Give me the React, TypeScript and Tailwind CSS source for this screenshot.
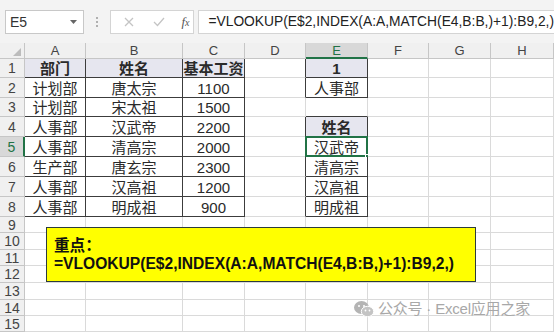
import React from "react";

const cols = ["A", "B", "C", "D", "E", "F", "G", "H", "I"];
const colW = [61, 97, 62, 61, 62, 61, 62, 63];
const rowH = [19, 20, 19, 20, 20, 20, 20, 20, 16, 17, 16, 17, 17, 16, 16];

const data: Record<string, string> = {
  A1: "部门", B1: "姓名", C1: "基本工资",
  A2: "计划部", B2: "唐太宗", C2: "1100",
  A3: "计划部", B3: "宋太祖", C3: "1500",
  A4: "人事部", B4: "汉武帝", C4: "2200",
  A5: "人事部", B5: "清高宗", C5: "2000",
  A6: "生产部", B6: "唐玄宗", C6: "2300",
  A7: "人事部", B7: "汉高祖", C7: "1200",
  A8: "人事部", B8: "明成祖", C8: "900",
  E1: "1", E2: "人事部", E4: "姓名",
  E5: "汉武帝", E6: "清高宗", E7: "汉高祖", E8: "明成祖",
};

const headerCells = new Set(["A1", "B1", "C1", "E1", "E4"]);

function inTable(c: number, r: number) {
  if (c <= 2 && r >= 1 && r <= 8) return true;
  if (c === 4 && (r === 1 || r === 2 || (r >= 4 && r <= 8))) return true;
  return false;
}

const formula = "=VLOOKUP(E$2,INDEX(A:A,MATCH(E4,B:B,)+1):B9,2,)";

function Cell({ c, r }: { c: number; r: number }) {
  const key = cols[c] + r;
  const t = inTable(c, r);
  const rightDark = t || inTable(c + 1, r);
  const bottomDark = t || inTable(c, r + 1);
  const isHead = headerCells.has(key);
  const selected = key === "E5";
  return (
    <div
      className={
        "relative flex items-center justify-center border-r border-b text-[15px] leading-none text-[#2a2a2a] " +
        (isHead ? "bg-[#e6e6ef] font-bold " : "bg-white ")
      }
      style={{
        borderRightColor: rightDark ? "#3c3c3c" : "#dadada",
        borderBottomColor: bottomDark ? "#3c3c3c" : "#dadada",
      }}
    >
      <span className="pt-[1px]">{data[key] ?? ""}</span>
      {selected && (
        <>
          <div className="pointer-events-none absolute -left-[1px] -top-[1px] -right-[1px] -bottom-[1px] border-2 border-[#217346]" />
          <div className="absolute -right-[4px] -bottom-[4px] h-[6px] w-[6px] border border-white bg-[#217346]" />
        </>
      )}
    </div>
  );
}

export default function App() {
  return (
    <div
      className="relative h-[332px] w-[554px] overflow-hidden bg-white"
      style={{ fontFamily: '"Liberation Sans", "Noto Sans CJK SC", Arial, sans-serif' }}
    >
      {/* Formula bar */}
      <div className="flex h-[43px] items-start gap-0 bg-[#f3f3f3] pt-[10px]">
        <div className="ml-[5px] flex h-[24px] w-[86px] items-center justify-between border border-[#c8c8c8] bg-white pl-[4px] pr-[6px] text-[14px] text-[#333]">
          <span>E5</span>
          <svg width="7" height="4" viewBox="0 0 7 4"><path d="M0 0 L7 0 L3.5 4 Z" fill="#666" /></svg>
        </div>
        <div className="ml-[12px] flex h-[24px] w-[3px] flex-col items-center justify-center gap-[2px]">
          <div className="h-[2px] w-[2px] bg-[#b0b0b0]" />
          <div className="h-[2px] w-[2px] bg-[#b0b0b0]" />
          <div className="h-[2px] w-[2px] bg-[#b0b0b0]" />
        </div>
        <div className="ml-[12px] flex h-[24px] w-[93px] items-center border border-[#d4d4d4] bg-white">
          <svg className="ml-[13px]" width="10" height="10" viewBox="0 0 10 10">
            <path d="M1 1 L9 9 M9 1 L1 9" stroke="#c4c4c4" strokeWidth="1.3" />
          </svg>
          <svg className="ml-[19px]" width="12" height="10" viewBox="0 0 12 10">
            <path d="M1 5 L4.5 8.5 L11 1" stroke="#c4c4c4" strokeWidth="1.3" fill="none" />
          </svg>
          <span className="ml-[16px] text-[13px] italic text-[#555]" style={{ fontFamily: '"Liberation Serif", serif' }}>
            f<span className="text-[10px]">x</span>
          </span>
        </div>
        <div className="ml-[4px] flex h-[24px] flex-1 items-center border border-r-0 border-[#d4d4d4] bg-white pl-[9px] text-[13.8px] text-[#222]">
          <span>{formula}</span>
        </div>
      </div>

      {/* Grid */}
      <div
        className="grid"
        style={{
          gridTemplateColumns: `25px ${colW.map((w) => w + "px").join(" ")}`,
          gridTemplateRows: `16px ${rowH.map((h) => h + "px").join(" ")}`,
        }}
      >
        <div className="relative border-r border-b border-[#c6c6c6] bg-[#f0f0f0]">
          <svg className="absolute bottom-[2px] right-[3px]" width="8" height="8" viewBox="0 0 8 8">
            <path d="M8 0 L8 8 L0 8 Z" fill="#bcbcbc" />
          </svg>
        </div>
        {colW.map((_, c) => (
          <div
            key={"h" + c}
            className={
              "flex items-center justify-center border-r text-[13px] leading-none " +
              (c === 4
                ? "border-b-2 border-b-[#217346] border-r-[#c6c6c6] bg-[#d8d8d8] text-[#217346]"
                : "border-b border-[#c6c6c6] bg-[#f0f0f0] text-[#444]")
            }
          >
            {cols[c]}
          </div>
        ))}
        {rowH.map((_, i) => {
          const r = i + 1;
          return (
            <React.Fragment key={"r" + r}>
              <div
                className={
                  "flex items-center justify-center border-b text-[14px] leading-none " +
                  (r === 5
                    ? "border-r-2 border-r-[#217346] border-b-[#c6c6c6] bg-[#d8d8d8] text-[#217346]"
                    : "border-r border-[#c6c6c6] bg-[#f0f0f0] text-[#444]")
                }
              >
                {r}
              </div>
              {colW.map((_, c) => (
                <Cell key={c} c={c} r={r} />
              ))}
            </React.Fragment>
          );
        })}
      </div>

      {/* Yellow text box */}
      <div className="absolute left-[46px] top-[227px] flex h-[55px] w-[430px] flex-col justify-center border-[1.5px] border-[#2c3b3b] bg-[#ffff00] pl-[7px] text-[15.6px] font-bold leading-[18px] text-[#111]">
        <div>重点：</div>
        <div>{formula}</div>
      </div>

      {/* Watermark */}
      <div className="absolute left-[354px] top-[298px] flex items-center gap-[4px] text-[15px] text-[#a8a8a8]">
        <svg width="20" height="18" viewBox="0 0 20 18">
          <ellipse cx="7.5" cy="7.5" rx="7.5" ry="6.5" fill="#b4b4b4" />
          <ellipse cx="13.5" cy="11.5" rx="6.2" ry="5.2" fill="#c4c4c4" stroke="#fff" strokeWidth="1" />
          <circle cx="5" cy="6" r="1" fill="#fff" />
          <circle cx="10" cy="6" r="1" fill="#fff" />
          <circle cx="11.5" cy="10.5" r="0.9" fill="#fff" />
          <circle cx="15.5" cy="10.5" r="0.9" fill="#fff" />
        </svg>
        <span className="tracking-[-0.2px]">公众号 · Excel应用之家</span>
      </div>
    </div>
  );
}
